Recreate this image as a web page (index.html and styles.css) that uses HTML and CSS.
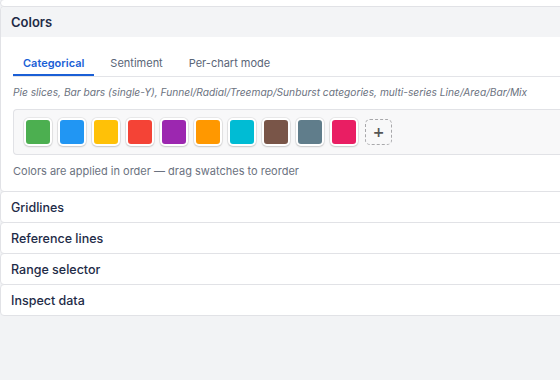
FILE: index.html
```html
<!DOCTYPE html>
<html lang="en">
  <head>
    <meta charset="UTF-8" />
    <meta name="viewport" content="width=device-width, initial-scale=1.0" />
    <title>Chart settings</title>
    <link rel="stylesheet" href="styles.css">
  </head>
  <body>
    <div class="panel">
      <div class="card card-prev"></div>

      <div class="card">
        <div class="card-header">Colors</div>
        <div class="card-body">
          <div class="tabs">
            <span class="tab active">Categorical</span>
            <span class="tab">Sentiment</span>
            <span class="tab">Per-chart mode</span>
          </div>
          <p class="hint">Pie slices, Bar bars (single-Y), Funnel/Radial/Treemap/Sunburst categories, multi-series Line/Area/Bar/Mix</p>
          <div class="swatches">
            <span class="swatch green"></span>
            <span class="swatch blue"></span>
            <span class="swatch amber"></span>
            <span class="swatch red"></span>
            <span class="swatch purple"></span>
            <span class="swatch orange"></span>
            <span class="swatch cyan"></span>
            <span class="swatch brown"></span>
            <span class="swatch slate"></span>
            <span class="swatch pink"></span>
            <button class="add-swatch" title="Add color">+</button>
          </div>
          <p class="caption">Colors are applied in order — drag swatches to reorder</p>
        </div>
      </div>

      <div class="card row">Gridlines</div>
      <div class="card row">Reference lines</div>
      <div class="card row">Range selector</div>
      <div class="card row">Inspect data</div>
    </div>
  </body>
</html>
```

FILE: styles.css
```css
html,
body {
  overflow: hidden;
}
body {
  margin: 0;
  background-color: #f2f3f5;
  font-family: Inter, "Noto Sans", sans-serif;
  color: #1e2b47;
}
.panel {
  margin-right: -8px;
}
.card {
  background-color: #fff;
  border: 1px solid #e1e2e6;
  border-radius: 4px;
  margin-top: -1px;
}
.card-prev {
  height: 6px;
}
.card-header {
  background-color: #f3f4f6;
  height: 30px;
  line-height: 30px;
  padding: 0 10px;
  font-size: 13px;
  font-weight: 600;
  border-radius: 4px 4px 0 0;
}
.card-body {
  padding: 12px 0 13px 12px;
}
.tabs {
  display: flex;
  border-bottom: 1px solid #e3e4e8;
}
.tab {
  padding: 7px 10px 6px 10px;
  font-size: 11px;
  line-height: 14px;
  color: #5a6577;
  margin-right: 6px;
}
.tab.active {
  color: #1a5fd6;
  font-weight: 600;
  border-bottom: 2px solid #1a5fd6;
  padding-bottom: 4px;
}
.hint {
  margin: 8px 0 10px;
  font-size: 10.2px;
  line-height: 14px;
  font-style: italic;
  color: #6b7280;
}
.swatches {
  display: flex;
  align-items: center;
  gap: 6px;
  padding: 8px 10px;
  background-color: #f8f8f9;
  border: 1px solid #e1e2e6;
  border-right: none;
  border-radius: 4px 0 0 4px;
}
.swatch {
  width: 24px;
  height: 24px;
  border: 2px solid #fff;
  border-radius: 5px;
  box-shadow: 0 0 0 1px rgba(0, 0, 0, 0.06), 0 1px 2px rgba(0, 0, 0, 0.14);
}
.green { background-color: #4caf50; }
.blue { background-color: #2196f3; }
.amber { background-color: #ffc107; }
.red { background-color: #f44336; }
.purple { background-color: #9c27b0; }
.orange { background-color: #ff9800; }
.cyan { background-color: #00bcd4; }
.brown { background-color: #795548; }
.slate { background-color: #607d8b; }
.pink { background-color: #e91e63; }
.add-swatch {
  width: 27px;
  height: 26px;
  margin-left: 1px;
  padding: 0;
  border: 1.5px dashed #a8a8ab;
  border-radius: 5px;
  background: transparent;
  color: #555;
  font-family: "DejaVu Sans", sans-serif;
  font-size: 14px;
  font-weight: bold;
  line-height: 20px;
}
.caption {
  margin: 9px 0 0;
  font-size: 11px;
  line-height: 14px;
  color: #6b7280;
}
.row {
  height: 29px;
  line-height: 30px;
  padding: 1px 10px 0;
  font-size: 12.5px;
  font-weight: 550;
}
```
